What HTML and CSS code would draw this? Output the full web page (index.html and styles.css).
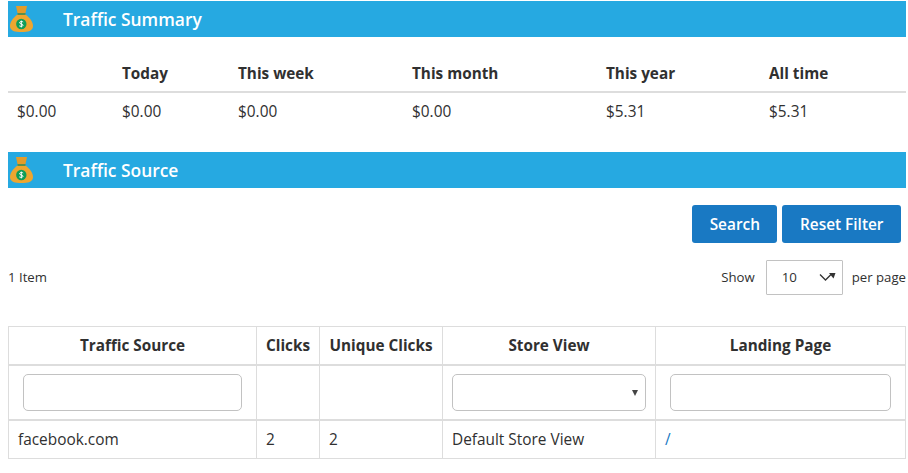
FILE: index.html
```html
<!DOCTYPE html>
<html lang="en">
<head>
<meta charset="utf-8">
<title>Traffic</title>
<link rel="stylesheet" href="styles.css">
</head>
<body>
<section class="bar">
  <svg class="bag" viewBox="0 0 23 26" aria-hidden="true">
    <path d="M6 0h11l-1.500 7h-8z" fill="#e39c2a"/>
    <path d="M7.500 8.500C3 12 0 16 0 20c0 5 5 6 11.500 6S23 25 23 20c0-4-3-8-7.500-11.500z" fill="#eea62f"/>
    <rect x="7.500" y="7" width="8" height="2" fill="#5a8f4a"/>
    <circle cx="11.300" cy="18" r="5.200" fill="#0f9d58"/>
    <path d="M13.200 16c-.6-.6-3.400-.9-3.600.6-.2 1.800 3.600.9 3.400 2.700-.2 1.400-2.800 1.300-3.700.6M11.300 14.600v6.800" fill="none" stroke="#fff" stroke-width="1"/>
  </svg>
  <h2 class="bar-title">Traffic Summary</h2>
</section>
<table class="summary">
  <thead>
    <tr>
      <th class="s1"></th><th class="s2">Today</th><th class="s3">This week</th><th class="s4">This month</th><th class="s5">This year</th><th class="s6">All time</th>
    </tr>
  </thead>
  <tbody>
    <tr>
      <td>$0.00</td><td>$0.00</td><td>$0.00</td><td>$0.00</td><td>$5.31</td><td>$5.31</td>
    </tr>
  </tbody>
</table>

<section class="bar bar-second">
  <svg class="bag" viewBox="0 0 23 26" aria-hidden="true">
    <path d="M6 0h11l-1.500 7h-8z" fill="#e39c2a"/>
    <path d="M7.500 8.500C3 12 0 16 0 20c0 5 5 6 11.500 6S23 25 23 20c0-4-3-8-7.500-11.500z" fill="#eea62f"/>
    <rect x="7.500" y="7" width="8" height="2" fill="#5a8f4a"/>
    <circle cx="11.300" cy="18" r="5.200" fill="#0f9d58"/>
    <path d="M13.200 16c-.6-.6-3.400-.9-3.600.6-.2 1.800 3.600.9 3.400 2.700-.2 1.400-2.800 1.300-3.700.6M11.300 14.600v6.800" fill="none" stroke="#fff" stroke-width="1"/>
  </svg>
  <h2 class="bar-title">Traffic Source</h2>
</section>
<div class="actions">
  <button class="btn" type="button">Search</button>
  <button class="btn" type="button">Reset Filter</button>
</div>
<div class="toolbar">
  <span class="count">1 Item</span>
  <div class="pager">
    <span>Show</span>
    <div class="limit">
      <span>10</span>
      <svg class="limit-arrow" width="17" height="10" viewBox="0 0 17 10"><path d="M1 2.500l5.500 5.500 6-6" fill="none" stroke="#333" stroke-width="1.300"/><path d="M10 1h6.500l-2 5.500z" fill="#333"/></svg>
    </div>
    <span>per page</span>
  </div>
</div>
<table class="grid">
  <thead>
    <tr>
      <th class="g1">Traffic Source</th><th class="g2">Clicks</th><th class="g3">Unique Clicks</th><th class="g4">Store View</th><th class="g5">Landing Page</th>
    </tr>
  </thead>
  <tbody>
    <tr class="filters">
      <td class="f-input"><input class="field" type="text"></td>
      <td></td>
      <td></td>
      <td class="f-select"><div class="field select"><span class="caret"></span></div></td>
      <td class="f-input"><input class="field" type="text"></td>
    </tr>
    <tr class="row">
      <td>facebook.com</td><td>2</td><td>2</td><td>Default Store View</td><td><a class="link" href="#">/</a></td>
    </tr>
  </tbody>
</table>
</body>
</html>
```
FILE: styles.css
```css
* { box-sizing: border-box; }
html, body { background: #fff; }
body {
  margin: 1px 2px 0 8px;
  font-family: "Open Sans", "Noto Sans", sans-serif;
  font-size: 14px;
  color: #303030;
}
.bar {
  height: 36px;
  background: #26a9e1;
  display: flex;
  align-items: center;
  position: relative;
  padding-left: 55px;
}
.bar-second { margin-top: 23px; }
.bag { position: absolute; left: 2px; top: 5px; width: 23px; height: 26px; }
.bar-title { margin: 0; font-size: 17.400px; font-weight: 600; color: #fff; line-height: 24px; }
table { border-collapse: collapse; table-layout: fixed; }
.summary { width: 898px; margin-top: 16px; }
.summary th { font-size: 15.300px; font-weight: 700; text-align: left; padding: 10px 9px 8px; height: 39px; border-bottom: 2px solid #ddd; color: #303030; line-height: 20px; }
.summary td { font-size: 15.400px; padding: 9px 9px 7px; line-height: 20px; height: 36px; }
.s1 { width: 105px; } .s2 { width: 116px; } .s3 { width: 174px; } .s4 { width: 194px; } .s5 { width: 163px; } .s6 { width: 146px; }
.actions { display: flex; justify-content: flex-end; gap: 5px; padding-right: 5px; margin-top: 17px; }
.btn {
  height: 38px; border: 0; border-radius: 3px; background: #1979c3; color: #fff;
  font-family: inherit; font-size: 15.400px; font-weight: 600; padding: 0 17.500px;
}
.toolbar { display: flex; justify-content: space-between; align-items: center; margin-top: 16px; height: 36px; font-size: 13.200px; }
.pager { display: flex; align-items: center; gap: 9px; }
.limit { width: 77px; height: 35px; margin-left: 2px; border: 1px solid #c2c2c2; border-radius: 1px; display: flex; align-items: center; justify-content: space-between; padding: 0 6px 0 15px; font-size: 13.300px; }
.grid { width: 898px; margin-top: 31px; }
.grid th, .grid td { border: 1px solid #ddd; }
.grid th { font-size: 15.300px; font-weight: 700; height: 38px; padding: 0 2px; border-bottom-width: 2px; text-align: center; line-height: 20px; }
.g1 { width: 248px; } .g2 { width: 63px; } .g3 { width: 123px; } .g4 { width: 213px; } .g5 { width: 250px; }
.filters td { height: 55px; padding: 0; border-bottom-width: 2px; }
.f-input { padding: 0 14px !important; }
.f-select { padding: 0 9px !important; }
.field { display: block; width: 100%; height: 37px; border: 1px solid #c2c2c2; border-radius: 5px; background: #fff; outline: 0; }
.select { position: relative; }
.caret { position: absolute; right: 7px; top: 15px; border-left: 3px solid transparent; border-right: 3px solid transparent; border-top: 6px solid #444; }
.row td { height: 39px; padding: 1px 9px 0; font-size: 15.400px; line-height: 20px; }
.link { color: #1979c3; text-decoration: none; }
```
